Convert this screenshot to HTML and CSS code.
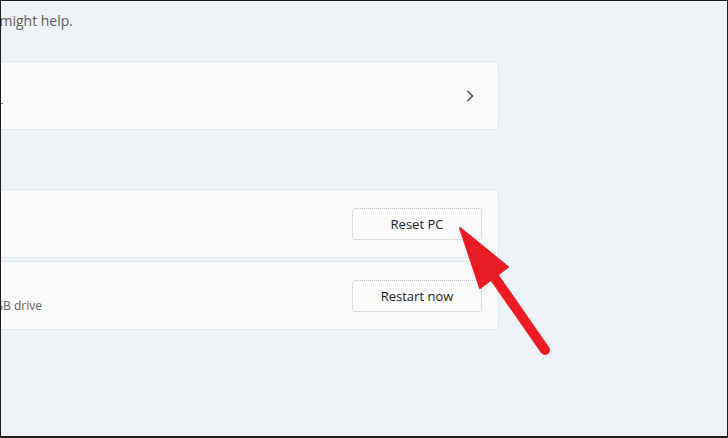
FILE: index.html
```html
<!DOCTYPE html>
<html lang="en">
<head>
    <meta charset="UTF-8">
    <meta name="viewport" content="width=device-width, initial-scale=1.0">
    <title>Recovery</title>
    <link rel="stylesheet" href="styles.css">
</head>
<body>
    <div class="frame">
        <main class="content">
            <div class="intro">
                <p class="intro-text">If you're having problems with your PC or want to reset it, these recovery options might help.</p>
            </div>

            <section class="card card-link">
                <div class="lead lead-fix">
                    <div class="text">
                        <p class="title">Fix problems without resetting your PC</p>
                        <p class="sub">Resetting can take a while — first, try resolving issues by running a troubleshooter</p>
                    </div>
                </div>
                <svg class="chevron" width="16" height="16" viewBox="0 0 16 16">
                    <path d="M5.5 3 L10.5 8 L5.5 13" fill="none" stroke="#3a3a3a" stroke-width="1.3"/>
                </svg>
            </section>

            <h2 class="heading">Recovery options</h2>

            <section class="card">
                <div class="lead lead-reset">
                    <div class="text">
                        <p class="title">Reset this PC</p>
                        <p class="sub">Choose to keep or remove your personal files, then reinstall Windows</p>
                    </div>
                </div>
                <button class="btn">Reset PC</button>
            </section>

            <section class="card">
                <div class="lead lead-start">
                    <div class="text">
                        <p class="title">Advanced startup</p>
                        <p class="sub">Restart your device to change startup settings, including starting from a disc or USB drive</p>
                    </div>
                </div>
                <button class="btn">Restart now</button>
            </section>
        </main>

        <svg class="arrow" width="728" height="438" viewBox="0 0 728 438">
            <line x1="490" y1="271" x2="545" y2="350" stroke="#ec1c26" stroke-width="10" stroke-linecap="round"/>
            <polygon points="460,228 480,288 508,267" fill="#ec1c26" stroke="#ec1c26" stroke-width="2" stroke-linejoin="round"/>
        </svg>
    </div>
</body>
</html>
```

FILE: styles.css
```css
*{
    margin: 0;
    box-sizing: border-box;
}
body
{
    margin: 0;
    font-family: "Open Sans", "Noto Sans", sans-serif;
}
.frame
{
    position: relative;
    width: 728px;
    height: 438px;
    overflow: hidden;
    background-color: #eff3f7;
    border: 1px solid #1c1c1c;
    border-bottom-width: 2px;
}
.content
{
    width: 819px;
    margin-left: -321px;
    padding-top: 10px;
    display: flex;
    flex-direction: column;
}
.intro
{
    width: 393px;
    display: flex;
    justify-content: flex-end;
    height: 20px;
}
.intro-text
{
    white-space: nowrap;
    font-size: 14px;
    line-height: 20px;
    color: #5b5b5b;
}
.card
{
    display: flex;
    align-items: center;
    height: 69px;
    padding: 0 16px 0 16px;
    background-color: #fafbfc;
    border: 1px solid #e3e5e8;
    border-radius: 5px;
    margin-bottom: 3px;
}
.card-link
{
    margin-top: 30px;
    padding-right: 20px;
}
.lead
{
    display: flex;
    justify-content: flex-end;
}
.lead-fix
{
    width: 306px;
}
.lead-reset
{
    width: 280px;
}
.lead-start
{
    width: 345px;
}
.text
{
    white-space: nowrap;
}
.title
{
    font-size: 14px;
    line-height: 20px;
    color: #1b1b1b;
}
.sub
{
    font-size: 12px;
    line-height: 16px;
    color: #5f5f5f;
}
.chevron
{
    margin-left: auto;
}
.heading
{
    font-size: 14px;
    font-weight: 600;
    line-height: 20px;
    color: #1b1b1b;
    padding: 20px 0 16px 16px;
}
.btn
{
    margin-left: auto;
    width: 130px;
    height: 32px;
    font-family: inherit;
    font-size: 13px;
    color: #1b1b1b;
    background-color: #fbfbfc;
    border: 1px dotted #bdbdbd;
    border-radius: 4px;
}
.arrow
{
    position: absolute;
    left: -1px;
    top: -1px;
}
```
